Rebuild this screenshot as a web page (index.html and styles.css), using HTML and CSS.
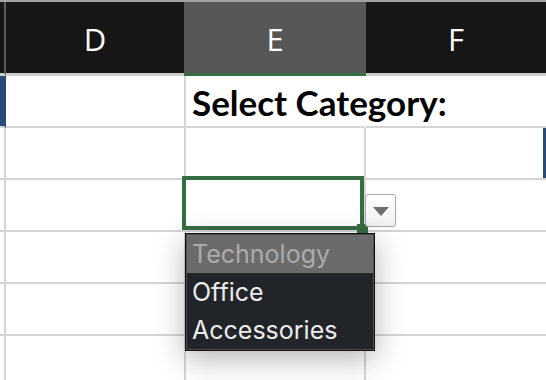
FILE: index.html
```html
<!DOCTYPE html>
<html lang="en">
<head>
    <meta charset="UTF-8">
    <meta name="viewport" content="width=device-width, initial-scale=1.0">
    <title>Select Category</title>
    <link rel="stylesheet" href="styles.css">
</head>
<body>
    <div class="sheet">
        <div class="top-line"></div>

        <div class="col-heads">
            <div class="corner"></div>
            <div class="col-head">D</div>
            <div class="col-head active">E</div>
            <div class="col-head">F</div>
        </div>

        <div class="grid">
            <!-- row 1 -->
            <div class="cell stub marked"></div>
            <div class="cell"></div>
            <div class="cell title">Select Category:</div>
            <div class="cell"></div>

            <!-- row 2 -->
            <div class="cell stub"></div>
            <div class="cell"></div>
            <div class="cell"></div>
            <div class="cell edge-marked"></div>

            <!-- row 3 -->
            <div class="cell stub"></div>
            <div class="cell"></div>
            <div class="cell selected">
                <span class="fill-handle"></span>
                <button class="drop-btn"><span class="arrow"></span></button>
                <ul class="drop-list">
                    <li class="hover">Technology</li>
                    <li>Office</li>
                    <li>Accessories</li>
                </ul>
            </div>
            <div class="cell"></div>

            <!-- row 4 -->
            <div class="cell stub"></div>
            <div class="cell"></div>
            <div class="cell"></div>
            <div class="cell"></div>

            <!-- row 5 -->
            <div class="cell stub"></div>
            <div class="cell"></div>
            <div class="cell"></div>
            <div class="cell"></div>

            <!-- row 6 -->
            <div class="cell stub"></div>
            <div class="cell"></div>
            <div class="cell"></div>
            <div class="cell"></div>
        </div>
    </div>
</body>
</html>
```

FILE: styles.css
```css
:root {
    --head-dark: #161616;
    --head-active: #575757;
    --grid-line: #d5d5d5;
    --excel-green: #376d45;
    --mark-blue: #2b4a78;
}

* {
    box-sizing: border-box;
}

body {
    margin: 0;
    padding: 0;
    width: 546px;
    height: 380px;
    overflow: hidden;
    background: #fff;
    font-family: 'Open Sans', 'Liberation Sans', sans-serif;
}

.sheet {
    width: 546px;
}

.top-line {
    height: 2px;
    background: #a3a3a3;
}

/* Column headers */
.col-heads {
    display: grid;
    grid-template-columns: 6px 178px 182px 180px;
    background: var(--head-dark);
}

.corner {
    border-right: 2px solid #5c5c5c;
    border-bottom: 3px solid #cdcdcd;
}

.col-head {
    height: 74px;
    padding-top: 4px;
    line-height: 67px;
    text-align: center;
    color: #fff;
    font-size: 31px;
    border-bottom: 3px solid #cdcdcd;
}

.col-head.active {
    background: var(--head-active);
    border-bottom-color: var(--excel-green);
}

/* Cells */
.grid {
    display: grid;
    grid-template-columns: 6px 180px 180px 180px;
    grid-auto-rows: 52px;
}

.cell {
    border-right: 2px solid var(--grid-line);
    border-bottom: 2px solid var(--grid-line);
    position: relative;
}

.cell:nth-child(4n) {
    border-right: none;
}

.stub.marked {
    background: var(--mark-blue);
    border-right-color: var(--mark-blue);
}

.edge-marked {
    box-shadow: inset -3px 0 0 var(--mark-blue);
}

.title {
    border-right-color: #fff;
    white-space: nowrap;
    overflow: visible;
    padding: 1px 0 0 6px;
    font-family: 'Lato', 'Liberation Sans', sans-serif;
    font-weight: 700;
    font-size: 35px;
    line-height: 50px;
    color: #000;
    z-index: 1;
}

/* Selected cell with validation list */
.selected::after {
    content: '';
    position: absolute;
    left: -4px;
    top: -4px;
    right: 0;
    bottom: 0;
    border: 4px solid var(--excel-green);
}

.fill-handle {
    position: absolute;
    right: -4px;
    bottom: -3px;
    width: 11px;
    height: 9px;
    background: var(--excel-green);
    z-index: 1;
}

.drop-btn {
    position: absolute;
    left: calc(100% + 1px);
    top: 14px;
    width: 31px;
    height: 33px;
    padding: 0;
    border: 1.5px solid #a9a9a9;
    border-radius: 3px;
    background: linear-gradient(#ffffff, #f1f1f1);
    display: flex;
    align-items: center;
    justify-content: center;
    z-index: 3;
}

.arrow {
    width: 0;
    height: 0;
    border-left: 8px solid transparent;
    border-right: 8px solid transparent;
    border-top: 9px solid #6e6e6e;
    margin-top: 2px;
}

.drop-list {
    position: absolute;
    left: -1px;
    top: 53px;
    width: 190px;
    margin: 0;
    padding: 0;
    list-style: none;
    background: #212428;
    border: 1px solid #111;
    box-shadow: inset 0 0 0 1px #4e4e4e, 0 8px 28px rgba(0, 0, 0, 0.3);
    padding: 1px;
    z-index: 4;
    font-family: 'Inter', 'Liberation Sans', sans-serif;
}

.drop-list li {
    height: 38px;
    line-height: 38px;
    padding-left: 5px;
    font-size: 25px;
    color: #ececec;
}

.drop-list li.hover {
    background: #6b6b6b;
    color: #ababab;
}
```
